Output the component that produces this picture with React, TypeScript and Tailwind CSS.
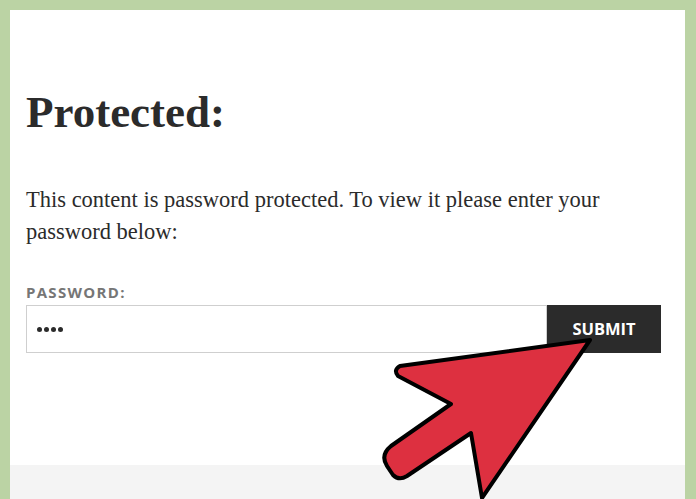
import React from 'react';

function Arrow() {
  // red pointer arrow drawn over the form
  return (
    <svg
      className="absolute left-0 top-0 pointer-events-none"
      width="696"
      height="499"
      viewBox="0 0 696 499"
    >
      <path
        d="M590 340 L400 366 Q393 370 398 376 L451 404 L391 446 Q380 455 387 466 L393 475 Q399 481 407 476 L471 433 L482 498 Z"
        fill="#dd3040"
        stroke="#000"
        strokeWidth="4"
        strokeLinejoin="round"
      />
    </svg>
  );
}

export default function App() {
  return (
    <div className="relative w-[696px] h-[499px] overflow-hidden bg-[#bbd3a4] pl-[10px] pr-[11px] pt-[10px]">
      <div className="flex h-full flex-col bg-white">
        <div className="flex-1 pl-[16px] pr-[20px] pt-[80px]">
          <h1 className="font-['Liberation_Serif',serif] text-[45px] font-bold leading-none text-[#2b2b2b]">
            Protected:
          </h1>
          <p className="mt-[49px] font-['Liberation_Serif',serif] text-[22.5px] leading-[32px] text-[#2b2b2b]">
            This content is password protected. To view it please enter your password below:
          </p>
          <label className="mt-[37px] block font-['Open_Sans',sans-serif] text-[15px] font-bold tracking-[1.3px] leading-none text-[#767676]">
            PASSWORD:
          </label>
          <div className="mt-[5px] flex h-[48px] w-[635px]">
            <div className="flex flex-1 items-center gap-[2px] border border-[#cfcfcf] pl-[10px]">
              <span className="h-[5px] w-[5px] rounded-full bg-[#2b2b2b]" />
              <span className="h-[5px] w-[5px] rounded-full bg-[#2b2b2b]" />
              <span className="h-[5px] w-[5px] rounded-full bg-[#2b2b2b]" />
              <span className="h-[5px] w-[5px] rounded-full bg-[#2b2b2b]" />
            </div>
            <button className="w-[114px] bg-[#2b2b2b] font-['Open_Sans',sans-serif] text-[16.5px] font-bold text-white">
              SUBMIT
            </button>
          </div>
        </div>
        <div className="h-[34px] bg-[#f4f4f4]" />
      </div>
      <Arrow />
    </div>
  );
}
